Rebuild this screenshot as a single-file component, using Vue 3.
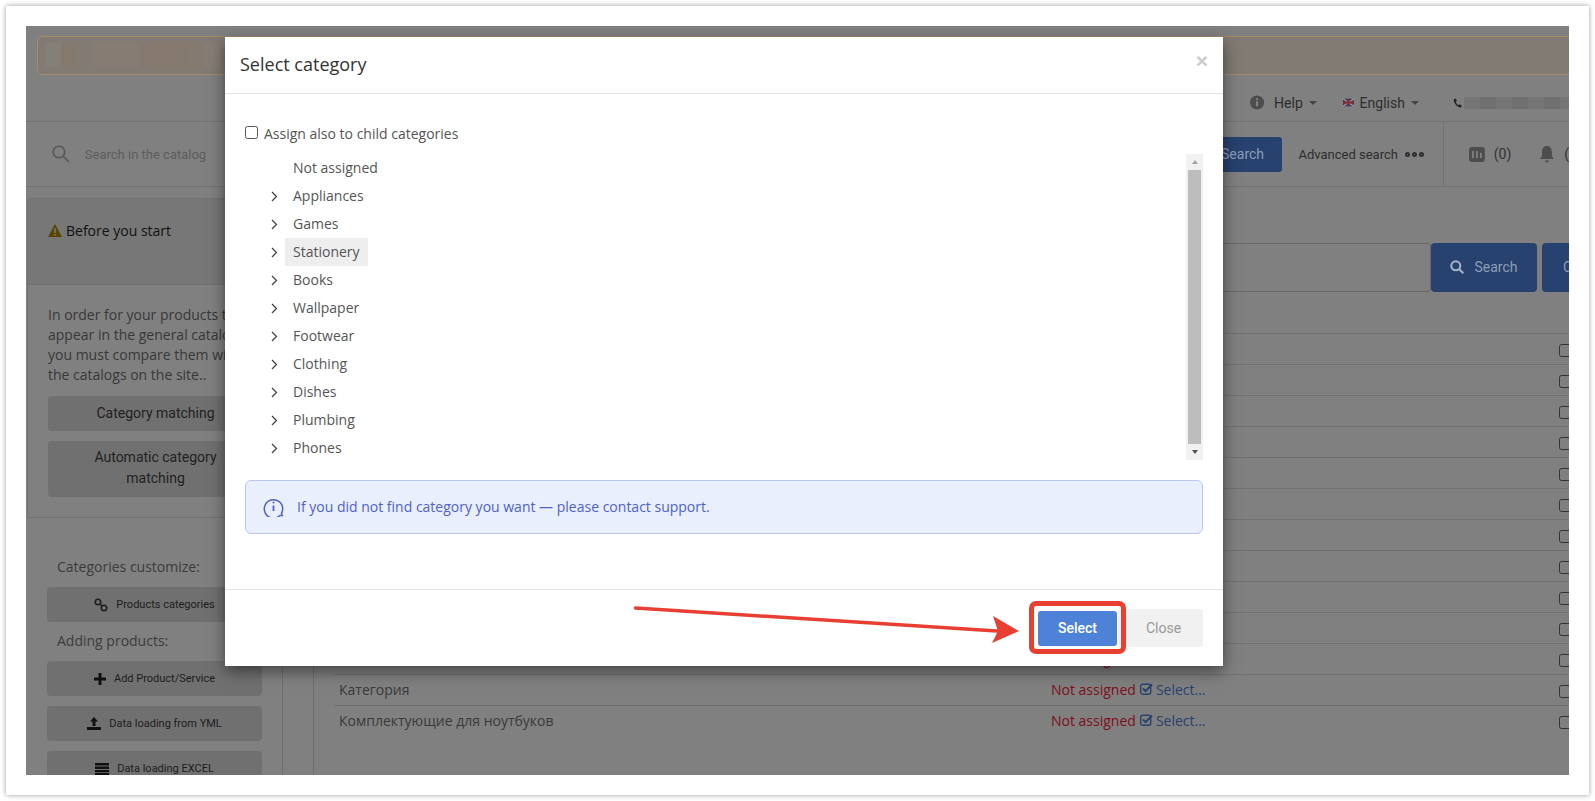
<script setup>
const tree = ['Appliances','Games','Stationery','Books','Wallpaper','Footwear','Clothing','Dishes','Plumbing','Phones']
const rows = Array.from({length:13},(_,i)=>({
  id:i,
  name: i===10?'Рюкзаки':i===11?'Категория':i===12?'Комплектующие для ноутбуков':'',
  show: i>=10
}))
const blocks = [
 {w:16,c:'#857f7a'},{w:16,c:'#85786c'},{w:47,c:'#867c74'},{w:48,c:'#85796f'},{w:16,c:'#857a70'},{w:16,c:'#867d75'}
]
const phone = [16,16,16,16,16,16,9]
</script>

<template>
  <div class="page">
  <div class="card">
    <div class="view">
      <div class="banner">
        <span v-for="(b,i) in blocks" :key="i" class="blk" :style="{width:b.w+'px',background:b.c}"></span>
      </div>
      <div class="topbar">
        <svg class="i-info" width="17" height="17" viewBox="0 0 17 17"><circle cx="8.5" cy="8.5" r="8.5" fill="#4d4d4d"/><rect x="7.2" y="7" width="2.6" height="6" fill="#808080"/><circle cx="8.5" cy="4.6" r="1.4" fill="#808080"/></svg>
        <span class="tb-txt help">Help</span><i class="caret"></i>
        <svg class="flag" width="13" height="9" viewBox="0 0 13 9"><rect width="13" height="9" fill="#2b3a66"/><path d="M0 0l13 9M13 0L0 9" stroke="#a99" stroke-width="1.6"/><path d="M6.5 0v9M0 4.500h13" stroke="#8a2a35" stroke-width="2.400"/></svg>
        <span class="tb-txt eng">English</span><i class="caret"></i>
        <svg class="ph" width="11" height="12" viewBox="0 0 11 12"><path d="M1 1.500C.500 5 4 11 9.500 11.500l1.200-2.500-3-1.500-1.200 1.200C5 8 3.600 6 3.300 4.600L4.700 3.600 3.400.5z" fill="#222"/></svg>
        <span class="phone-blur"><span v-for="(w,i) in phone" :key="i" :style="{width:w+'px',background:i%2?'#6f6f6f':'#767676'}"></span></span>
      </div>
      <div class="searchbar">
        <svg class="s-ico" width="18" height="18" viewBox="0 0 18 18" fill="none" stroke="#5a5a5a" stroke-width="1.700"><circle cx="7" cy="7" r="5.800"/><path d="M11.300 11.300L17 17"/></svg>
        <span class="placeholder">Search in the catalog</span>
        <span class="top-search">Search</span>
        <span class="adv">Advanced search</span>
        <span class="dots"><i></i><i></i><i></i></span>
        <span class="vdiv"></span>
        <svg class="chart" width="16" height="15" viewBox="0 0 16 15"><rect width="16" height="15" rx="3" fill="#4d4d4d"/><path d="M4 4v7M8 4v7M12 6v5" stroke="#808080" stroke-width="1.800"/></svg>
        <span class="cnt">(0)</span>
        <svg class="bell" width="14" height="17" viewBox="0 0 14 17"><path d="M7 0c3.500 0 5 2.700 5 6v4l2 3H0l2-3V6c0-3.300 1.500-6 5-6z" fill="#4d4d4d"/><path d="M5 14.500a2 2 0 0 0 4 0z" fill="#4d4d4d"/></svg>
        <span class="cnt bell-cnt">(</span>
      </div>
      <div class="content">
        <aside class="side">
          <div class="panel">
            <div class="panel-head">
              <svg width="14" height="13" viewBox="0 0 14 13"><path d="M7 0l7 13H0z" fill="#5a4500"/><rect x="6.300" y="4" width="1.400" height="5" fill="#808080"/><rect x="6.300" y="10" width="1.400" height="1.500" fill="#808080"/></svg>
              <span>Before you start</span>
            </div>
            <div class="panel-body">
              <p>In order for your products to appear in the general catalog, you must compare them with the catalogs on the site..</p>
              <div class="sbtn">Category matching</div>
              <div class="sbtn two">Automatic category matching</div>
            </div>
          </div>
          <div class="tools">
            <div class="tl-title first">Categories customize:</div>
            <div class="tbtn">
              <svg width="14" height="14" viewBox="0 0 14 14" fill="none" stroke="#1e1e1e" stroke-width="1.600"><circle cx="4" cy="4" r="2.700"/><circle cx="10" cy="10" r="2.700"/><path d="M6 6l2 2"/></svg>
              Products categories
            </div>
            <div class="tl-title">Adding products:</div>
            <div class="tbtn">
              <svg width="12" height="12" viewBox="0 0 12 12"><path d="M4.500 0h3v4.500H12v3H7.500V12h-3V7.500H0v-3h4.500z" fill="#111"/></svg>
              Add Product/Service
            </div>
            <div class="tbtn gap">
              <svg width="14" height="13" viewBox="0 0 14 13"><path d="M7 0l4 4.500H8.500V9h-3V4.500H3z" fill="#111"/><rect y="10" width="14" height="3" fill="#111"/></svg>
              Data loading from YML
            </div>
            <div class="tbtn gap">
              <svg width="14" height="12" viewBox="0 0 14 12"><path d="M0 0h14v2.500H0zM0 3.500h14V6H0zM0 7h14v2.200H0zM0 10h14v2H0z" fill="#111"/></svg>
              Data loading EXCEL
            </div>
          </div>
        </aside>
        <div class="rail"></div>
        <main class="main">
          <div class="filter">
            <div class="finput"></div>
            <div class="fbtn">
              <svg width="14" height="14" viewBox="0 0 14 14" fill="none" stroke="#a9b6c9" stroke-width="2"><circle cx="5.800" cy="5.800" r="4.500"/><path d="M9 9l4.300 4.300"/></svg>
              Search
            </div>
            <div class="fbtn next">C</div>
          </div>
          <div v-for="r in rows" :key="r.id" class="row">
            <span class="nm">{{ r.name }}</span>
            <span v-if="r.show" class="st">
              <span class="na">Not assigned</span>
              <svg width="13" height="12" viewBox="0 0 13 12" fill="none"><rect x=".7" y="1.200" width="10" height="10" rx="2" stroke="#27426f" stroke-width="1.400"/><path d="M3 5.500l2.600 2.600L12 1.500" stroke="#27426f" stroke-width="2"/></svg>
              <span class="sel">Select...</span>
            </span>
            <span v-else></span>
            <span class="cb"></span>
          </div>
        </main>
      </div>

      <section class="modal">
        <header class="m-head">
          <h2>Select category</h2>
          <span class="x">×</span>
        </header>
        <div class="m-body">
          <label class="assign"><span class="box"></span>Assign also to child categories</label>
          <div class="treewrap">
            <div class="tree">
              <div class="t-row"><span class="chev"></span><span class="lbl">Not assigned</span></div>
              <div v-for="t in tree" :key="t" class="t-row">
                <span class="chev"><svg width="7" height="11" viewBox="0 0 7 11" fill="none" stroke="#444" stroke-width="1.300"><path d="M1 1l4.500 4.500L1 10"/></svg></span>
                <span class="lbl" :class="{on:t==='Stationery'}">{{ t }}</span>
              </div>
            </div>
            <div class="sb">
              <i class="up"></i>
              <div class="thumb"></div>
              <i class="down"></i>
            </div>
          </div>
          <div class="alert">
            <svg width="21" height="21" viewBox="0 0 21 21" fill="none" stroke="#4f62c8" stroke-width="1.500"><path d="M19.500 19.500h-2.600a9.200 9.200 0 1 1 2.800-7c0 2.500-.500 3.900-1.300 5z" stroke-linejoin="round"/><path d="M10.500 9.500v5.500" stroke-width="1.800"/><circle cx="10.500" cy="6.500" r="1" fill="#4f62c8" stroke="none"/></svg>
            <span>If you did not find category you want — please contact support.</span>
          </div>
        </div>
        <footer class="m-foot">
          <button class="b-select">Select</button>
          <button class="b-close">Close</button>
        </footer>
      </section>

      <div class="redbox"></div>
      <svg class="arrow" width="420" height="50" viewBox="0 0 420 50">
        <path d="M15.500 8L385 31.500" stroke="#e83f33" stroke-width="3.400" stroke-linecap="round"/>
        <path d="M373 16L399 31 372 43 378 31z" fill="#e83f33"/>
      </svg>
    </div>
  </div>
  </div>
</template>

<style>
html{overflow:hidden;background:#fff}
body{margin:0;background:#fff}
</style>

<style scoped>
*{box-sizing:border-box}
.page{padding:6px 0 6px 6px;width:1595px;height:801px}
.card{position:relative;width:1583px;height:789px;padding:20px;background:#fff;box-shadow:0 0 5px rgba(0,0,0,.4);font-family:"Open Sans",sans-serif}
.view{position:relative;width:1543px;height:749px;background:#808080;overflow:hidden;padding-top:10px}
.banner{display:flex;align-items:stretch;margin-left:11px;width:1560px;height:39px;padding:6px 7px;border:1px solid #a98a66;border-radius:6px;background:#827b74}
.blk{height:24px;display:block}
.blk:nth-child(2){margin-right:16px}
.topbar{display:flex;align-items:center;height:47px;padding:9px 0 0 1224px;border-bottom:1px solid #727272;font-family:Roboto,sans-serif;white-space:nowrap}
.tb-txt{font-size:14px;color:#2e2e2e}
.help{margin-left:10px}
.caret{display:inline-block;width:0;height:0;border-left:4px solid transparent;border-right:4px solid transparent;border-top:4px solid #444;margin-left:6px}
.flag{margin-left:26px}
.eng{margin-left:6px}
.ph{margin-left:34px}
.phone-blur{display:flex;height:12px;margin-left:2px}
.phone-blur span{display:block}
.searchbar{display:flex;align-items:center;height:65px;padding-left:26px;border-bottom:1px solid #727272;font-family:Roboto,sans-serif;white-space:nowrap}
.placeholder{margin-left:15px;font-size:13px;color:#5d5d5d;width:200px}
.top-search{margin-left:881px;width:119px;height:35px;line-height:35px;padding-left:57px;background:#27426f;border-radius:3px;color:#8e9db6;font-size:14px}
.adv{margin-left:16px;font-size:13px;color:#2e2e2e}
.dots{display:flex;gap:2px;margin-left:7px}
.dots i{width:5px;height:5px;border:2px solid #2e2e2e;border-radius:50%}
.vdiv{width:1px;height:65px;background:#727272;margin-left:19px}
.chart{margin-left:25px}
.cnt{margin-left:9px;font-size:14px;color:#333}
.bell{margin-left:29px}
.bell-cnt{margin-left:10px}
.content{display:flex;height:589px;align-items:stretch}
.side{width:257px;flex:none;border-right:1px solid #6f6f6f;padding-top:11px}
.panel{border:1px solid #727272;border-radius:4px 4px 0 0;margin-left:1px;height:320px;border-right:none}
.panel-head{display:flex;align-items:center;gap:4px;height:86px;background:#777;border-bottom:1px solid #6f6f6f;padding:0 0 22px 20px;font-size:14px;color:#111}
.panel-body{padding:20px 20px 0;}
.panel-body p{margin:0 0 11px;font-size:14px;line-height:20px;color:#383838}
.sbtn{height:35px;line-height:35px;background:#707070;border-radius:4px;text-align:center;font:14px/35px Roboto,sans-serif;color:#222;width:215px}
.sbtn.two{height:56px;margin-top:10px;line-height:21px;padding:6px 20px}
.tools{padding:39px 0 0 21px}
.tl-title{margin:9px 0 10px 10px;height:20px;font-size:14px;line-height:20px;color:#3c3c3c}
.tl-title.first{margin-top:0}
.tbtn{display:flex;align-items:center;justify-content:center;gap:8px;width:215px;height:35px;background:#707070;border-radius:4px;font:11px Roboto,sans-serif;color:#1d1d1d}
.tbtn.gap{margin-top:10px}
.rail{width:31px;flex:none;border-right:1px solid #6f6f6f}
.main{flex:none;width:1400px;padding:56px 0 0 20px}
.filter{display:flex;height:49px;margin-bottom:41px}
.finput{flex:none;width:1097px;border:1px solid #6a6a6a;border-radius:3px}
.fbtn{flex:none;display:flex;align-items:center;justify-content:center;gap:10px;width:106px;padding-bottom:2px;background:#27426f;border-radius:4px;font:14px Roboto,sans-serif;color:#8e9db6}
.fbtn.next{margin-left:5px;justify-content:flex-start;padding-left:21px}
.row{display:grid;grid-template-columns:717px 508px 13px;align-items:center;height:31px;border-top:1px solid #717171;font-size:14px;color:#333;white-space:nowrap}
.nm{padding-left:5px;line-height:30px;color:#3a3a3a}
.st{display:flex;align-items:center;margin-top:-2px}
.na{color:#7d0f1c}
.st svg{margin:0 3px 0 4px}
.sel{color:#27426f}
.cb{width:13px;height:13px;border:1px solid #333;border-radius:2.500px;margin-top:3px}
.modal{position:absolute;left:199px;top:11px;width:998px;height:629px;display:flex;flex-direction:column;background:#fff;box-shadow:0 5px 15px rgba(0,0,0,.5)}
.m-head{display:flex;align-items:center;justify-content:space-between;height:57px;padding:0 15px 2px 15px;border-bottom:1px solid #e5e5e5}
.m-head h2{margin:0;font-size:18px;font-weight:400;color:#333}
.x{font:21px "Liberation Sans",sans-serif;font-weight:700;color:#ccc;margin-top:-6px}
.m-body{flex:1;padding:29px 20px 0}
.assign{display:flex;align-items:center;height:20px;margin-bottom:11px;font-size:14px;color:#555}
.box{width:13px;height:13px;border:1px solid #555;border-radius:2.500px;margin-right:6px;margin-top:-1px}
.treewrap{display:flex;justify-content:space-between;height:306px}
.t-row{display:flex;align-items:center;height:28px;padding-left:26px;font-size:14px;color:#555}
.chev{width:14px;display:flex;align-items:center}
.lbl{padding:0 8px;height:28px;line-height:28px}
.lbl.on{background:#eee}
.sb{position:relative;width:17px;background:#f1f1f1;display:flex;flex-direction:column;align-items:center;justify-content:space-between;padding:0 2px}
.thumb{flex:1;width:13px;background:#bdbdbd;margin:0}
.sb i{display:block;width:0;height:0;flex:none;margin:6px 0;border-left:3.500px solid transparent;border-right:3.500px solid transparent}
.up{border-bottom:4px solid #a3a3a3}
.down{border-top:4px solid #505050}
.alert{display:flex;align-items:center;gap:13px;height:54px;margin-top:20px;padding:0 0 2px 17px;background:#e9effc;border:1px solid #bcc7f0;border-radius:6px;font-size:14px;color:#4f62c8}
.m-foot{display:flex;align-items:center;justify-content:flex-end;gap:1px;height:77px;padding-right:20px;border-top:1px solid #e5e5e5}
.m-foot button{border:0;font:14px Roboto,sans-serif;padding:0;border-radius:3px}
.b-select{width:79px;height:35px;background:#4e82d8;color:#fff;font-weight:500!important}
.m-foot .b-close{width:85px;height:38px;background:#f1f1f1;color:#999;padding-left:6px}
.redbox{position:absolute;left:1003px;top:575px;width:97px;height:53px;border:5px solid #e83f33;border-radius:7px}
.arrow{position:absolute;left:594px;top:574px}
</style>
